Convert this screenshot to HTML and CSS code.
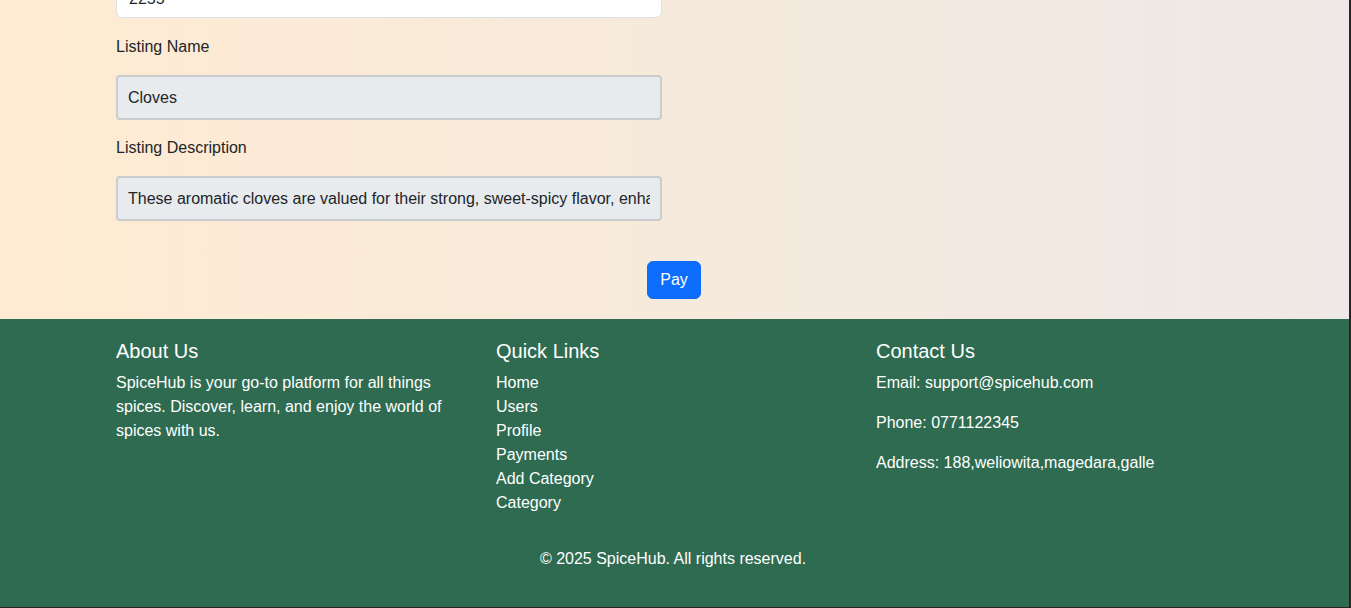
FILE: index.html
```html
<!DOCTYPE html>
<html lang="en">
<head>
<meta charset="utf-8">
<title>SpiceHub - Payment</title>
<link rel="stylesheet" href="styles.css">
</head>
<body>
<div class="page">
  <main class="main">
    <div class="container">
      <form class="pay-form">
        <div class="field field-first">
          <input class="input input-white" type="text" value="2255">
        </div>
        <div class="field">
          <label class="label">Listing Name</label>
          <input class="input input-disabled" type="text" value="Cloves" disabled>
        </div>
        <div class="field">
          <label class="label">Listing Description</label>
          <input class="input input-disabled" type="text" value="These aromatic cloves are valued for their strong, sweet-spicy flavor, enhancing both sweet and savory dishes." disabled>
        </div>
      </form>
      <div class="actions">
        <button class="btn-pay" type="button">Pay</button>
      </div>
    </div>
  </main>
  <footer class="footer">
    <div class="container">
      <div class="footer-row">
        <div class="footer-col">
          <h5 class="footer-title">About Us</h5>
          <p class="footer-text">SpiceHub is your go-to platform for all things spices. Discover, learn, and enjoy the world of spices with us.</p>
        </div>
        <div class="footer-col">
          <h5 class="footer-title">Quick Links</h5>
          <ul class="footer-links">
            <li><a href="#">Home</a></li>
            <li><a href="#">Users</a></li>
            <li><a href="#">Profile</a></li>
            <li><a href="#">Payments</a></li>
            <li><a href="#">Add Category</a></li>
            <li><a href="#">Category</a></li>
          </ul>
        </div>
        <div class="footer-col">
          <h5 class="footer-title">Contact Us</h5>
          <p class="footer-text">Email: support@spicehub.com</p>
          <p class="footer-text">Phone: 0771122345</p>
          <p class="footer-text">Address: 188,weliowita,magedara,galle</p>
        </div>
      </div>
      <div class="copyright">
        <p class="footer-text">© 2025 SpiceHub. All rights reserved.</p>
      </div>
    </div>
  </footer>
</div>
</body>
</html>
```

FILE: styles.css
```css
* {
  box-sizing: border-box;
}

html, body {
  margin: 0;
  padding: 0;
  height: 608px;
  overflow: hidden;
  background: #262626;
}

body {
  font-family: "Liberation Sans", Arial, sans-serif;
  font-size: 16px;
  line-height: 24px;
  color: #212529;
}

.page {
  width: 1349px;
  height: 607px;
  overflow: hidden;
}

.container {
  width: 1140px;
  margin: 0 auto;
  padding: 0 12px;
}

.main .container,
.footer .container {
  margin-left: 104px;
}

.main {
  background: linear-gradient(to right, #ffebd2 0%, #f6eadc 50%, #eee8e6 100%);
  padding-bottom: 20px;
}

.pay-form {
  width: 546px;
  margin-top: -20px;
}

.field {
  display: flex;
  flex-direction: column;
  margin-bottom: 16px;
}

.field-first {
  margin-bottom: 17px;
}

.field:last-child {
  margin-bottom: 0;
}

.label {
  display: block;
  margin-bottom: 16px;
  line-height: 24px;
}

.input {
  display: block;
  width: 100%;
  font-family: inherit;
  font-size: 16px;
  line-height: 24px;
  color: #212529;
  outline: none;
}

.input-white {
  height: 38px;
  padding: 6px 12px;
  background: #fff;
  border: 1px solid #dee2e6;
  border-radius: 6px;
}

.input-disabled {
  height: 45px;
  padding: 8px 10px;
  background: #e8ebee;
  border: 2px solid #cbcccd;
  border-radius: 4px;
  opacity: 1;
  -webkit-text-fill-color: #212529;
}

.actions {
  display: flex;
  justify-content: center;
  padding-top: 40px;
}

.btn-pay {
  height: 38px;
  padding: 6px 12px;
  font-family: inherit;
  font-size: 16px;
  line-height: 24px;
  color: #fff;
  background: #0d6efd;
  border: 1px solid #0d6efd;
  border-radius: 6px;
  cursor: pointer;
}

.footer {
  background: #2e6b51;
  color: #fff;
  padding-top: 20px;
  padding-bottom: 20px;
}

.footer-row {
  display: grid;
  grid-template-columns: repeat(3, 1fr);
  margin: 0 -12px;
}

.footer-col {
  padding: 0 12px;
}

.footer-title {
  margin: 0 0 8px;
  font-size: 20px;
  font-weight: 400;
  line-height: 24px;
}

.footer-text {
  margin: 0 0 16px;
}

.footer-links {
  list-style: none;
  margin: 0 0 16px;
  padding: 0;
}

.footer-links a {
  color: #fff;
  text-decoration: none;
}

.copyright {
  text-align: center;
  margin-top: 16px;
  margin-left: -2px;
}
```
